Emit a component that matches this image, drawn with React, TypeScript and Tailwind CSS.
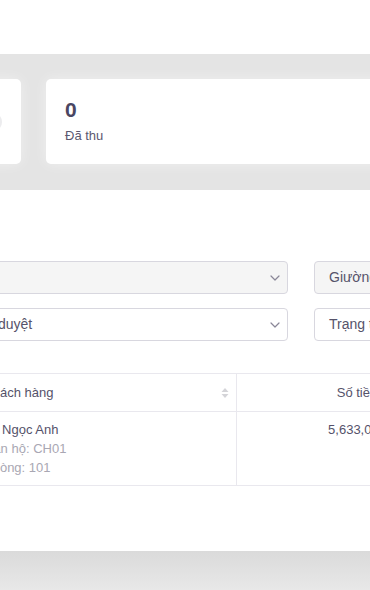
import React from "react";

function Chevron() {
  return (
    <svg width="10" height="6" viewBox="0 0 10 6" fill="none" className="shrink-0">
      <path d="M1 1l4 4 4-4" stroke="#8a8798" strokeWidth="1.2" strokeLinecap="round" strokeLinejoin="round" />
    </svg>
  );
}

function SortIcon() {
  return (
    <svg width="8" height="12" viewBox="0 0 8 12" className="shrink-0">
      <path d="M4 1L7.5 5H0.5z" fill="#d4d4d8" />
      <path d="M4 11L0.5 7H7.5z" fill="#d4d4d8" />
    </svg>
  );
}

export default function App() {
  return (
    <div className="w-[370px] h-[590px] overflow-hidden bg-white font-['Liberation_Sans',Arial,sans-serif]">
      <div className="h-[54px] bg-white" />

      {/* stat cards */}
      <div className="h-[136px] bg-[#e4e4e4] pt-[25px]">
        <div className="flex gap-[25px] -ml-[179px]">
          <div className="w-[200px] h-[85px] shrink-0 rounded-[5px] bg-white flex items-center justify-end pr-[19px] shadow-[0_0_14px_rgba(255,255,255,0.45)]">
            <div className="w-[20px] h-[20px] rounded-full border-[3px] border-[#ececee]" />
          </div>
          <div className="w-[420px] h-[85px] shrink-0 rounded-[5px] bg-white pl-[19px] pt-[17px] shadow-[0_0_14px_rgba(255,255,255,0.45)]">
            <div className="text-[21px] leading-[28px] font-bold text-[#4a4662]">0</div>
            <div className="mt-[3px] text-[13px] leading-[18px] text-[#5b5870]">Đã thu</div>
          </div>
        </div>
      </div>

      {/* list panel */}
      <div className="h-[361px] bg-white pt-[71px]">
        <div className="flex flex-col gap-[14px]">
          <div className="flex gap-[26px] -ml-[40px]">
            <div className="w-[328px] h-[33px] shrink-0 rounded-[4px] border border-[#d8d7df] bg-[#f5f5f5] flex items-center justify-end pr-[7px]">
              <Chevron />
            </div>
            <div className="w-[200px] h-[33px] shrink-0 rounded-[4px] border border-[#d8d7df] bg-[#f5f5f5] flex items-center pl-[14px] text-[14px] text-[#56536a]">
              Giường
            </div>
          </div>
          <div className="flex gap-[26px] -ml-[40px]">
            <div className="w-[328px] h-[33px] shrink-0 rounded-[4px] border border-[#d8d7df] bg-white flex items-center justify-between pl-[6px] pr-[7px] text-[14px] text-[#56536a]">
              <span>Chờ duyệt</span>
              <Chevron />
            </div>
            <div className="w-[200px] h-[33px] shrink-0 rounded-[4px] border border-[#d8d7df] bg-white flex items-center pl-[14px] text-[14px] text-[#56536a] whitespace-nowrap">
              Trạng thái
            </div>
          </div>
        </div>

        {/* table */}
        <div className="mt-[32px] -ml-[32px] w-[520px] border-t border-[#e9e8ee] text-[13px]">
          <div className="flex h-[38px] border-b border-[#e9e8ee]">
            <div className="w-[269px] shrink-0 flex items-center justify-between pl-[16px] pr-[7px] border-r border-[#e9e8ee] text-[#55526a]">
              <span>Khách hàng</span>
              <SortIcon />
            </div>
            <div className="w-[240px] shrink-0 flex items-center justify-center text-[#55526a]">Số tiền</div>
          </div>
          <div className="flex border-b border-[#e9e8ee]">
            <div className="w-[269px] shrink-0 pl-[16px] py-[8px] border-r border-[#e9e8ee] leading-[19px]">
              <div className="text-[#55526a]">Lê Ngọc Anh</div>
              <div className="text-[#a9a7b3]">Căn hộ: CH01</div>
              <div className="text-[#a9a7b3]">Phòng: 101</div>
            </div>
            <div className="w-[240px] shrink-0 py-[8px] text-center leading-[19px] text-[#55526a]">5,633,000</div>
          </div>
        </div>
      </div>

      <div className="h-[39px] bg-linear-to-b from-[#dadada] to-[#e8e8e8]" />
    </div>
  );
}
